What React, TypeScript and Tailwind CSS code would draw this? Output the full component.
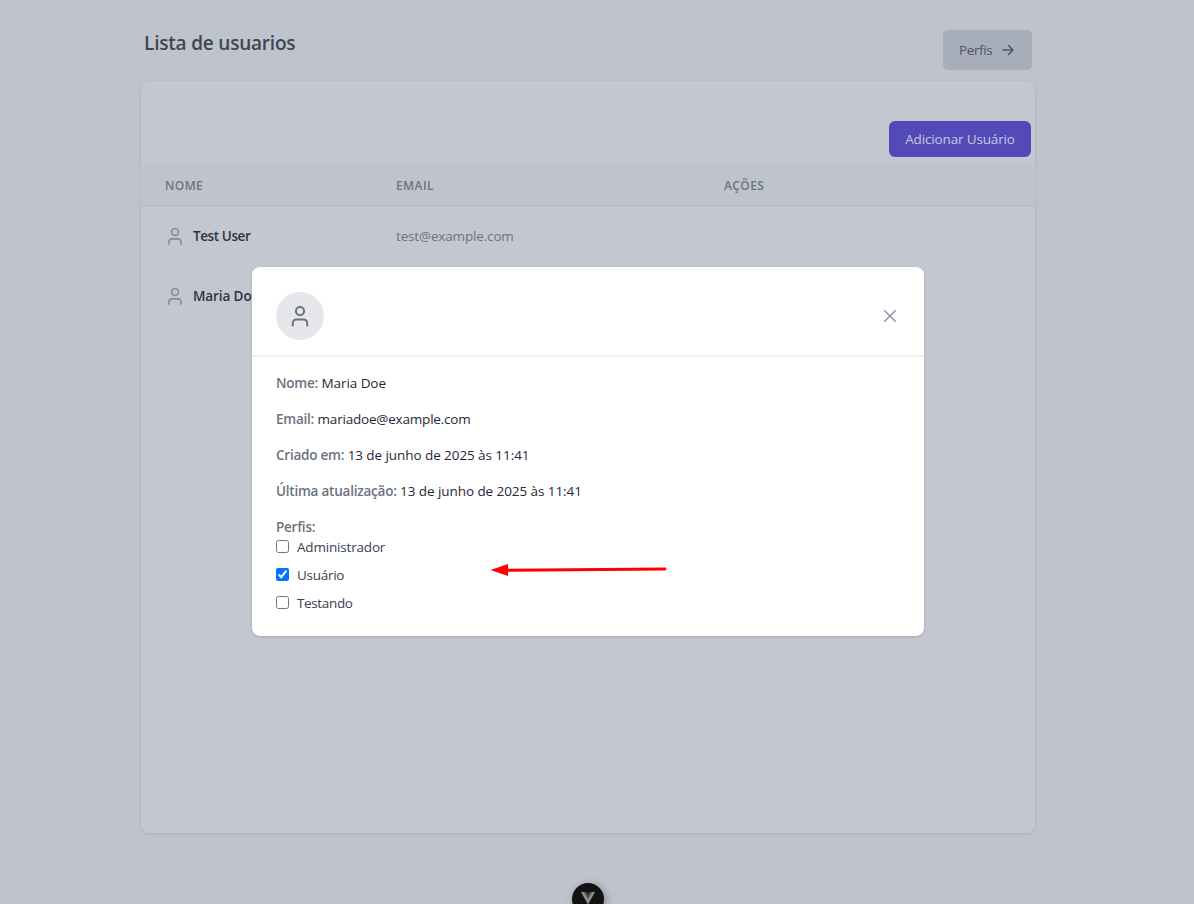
import { ReactNode } from "react";

function UserIcon({ className }: { className: string }) {
  return (
    <svg viewBox="0 0 24 24" fill="none" stroke="currentColor" strokeWidth="2" strokeLinecap="round" strokeLinejoin="round" className={className}>
      <circle cx="12" cy="7.1" r="4.1" />
      <path d="M19.200 21.500v-2.500a3.500 3.500 0 0 0-3.500-3.500H8.300a3.500 3.500 0 0 0-3.500 3.500v2.500" />
    </svg>
  );
}

function Row({ name, email, nameClass }: { name: string; email: string; nameClass: string }) {
  return (
    <div className="grid h-[60px] grid-cols-[231px_328px_1fr] items-center px-6">
      <div className="flex items-center">
        <UserIcon className="size-5 text-[#858d9c]" />
        <span className={`ml-2 text-[13.5px] leading-5 font-semibold text-[#2d3444] ${nameClass}`}>{name}</span>
      </div>
      <div className="mb-px text-[13.5px] leading-5 tracking-[-0.16px] text-[#6c7483]">{email}</div>
    </div>
  );
}

function Field({ label, children }: { label: string; children?: ReactNode }) {
  return (
    <p className="h-5 text-[13.5px] leading-5 tracking-[-0.07px] whitespace-nowrap text-[#1f2937]">
      <span className="font-semibold tracking-[-0.23px] text-[#6b7280]">{label}</span> {children}
    </p>
  );
}

function Option({ label, checked, className }: { label: string; checked?: boolean; className: string }) {
  return (
    <label className={`flex h-5 items-center text-[13.5px] leading-5 text-[#374151] ${className}`}>
      <input type="checkbox" defaultChecked={checked} className="mr-2 mb-[2px] size-[13px]" />
      {label}
    </label>
  );
}

function Modal() {
  return (
    <div className="absolute top-[267px] left-[252px] flex h-[369px] w-[672px] flex-col rounded-lg bg-white shadow-[0_1px_3px_rgba(0,0,0,0.16)]">
      <div className="flex h-[90px] items-center justify-between border-b-2 border-[#eeeff1] px-6 pt-[9px]">
        <div className="flex size-12 items-center justify-center rounded-full bg-[#e5e7eb]">
          <UserIcon className="size-6 text-[#6b7280]" />
        </div>
        <svg viewBox="0 0 20 20" fill="none" stroke="#8b95a5" strokeWidth="1.5" strokeLinecap="round" className="size-5">
          <path d="M4.700 4.700l10.600 10.600M15.300 4.700l-10.600 10.600" />
        </svg>
      </div>
      <div className="flex flex-col gap-4 px-6 pt-4">
        <Field label="Nome:">Maria Doe</Field>
        <Field label="Email:"><span className="tracking-[-0.2px]">mariadoe@example.com</span></Field>
        <Field label="Criado em:">13 de junho de 2025 às 11:41</Field>
        <Field label="Última atualização:">13 de junho de 2025 às 11:41</Field>
        <div>
          <Field label="Perfis:" />
          <div className="flex flex-col gap-2">
            <Option label="Administrador" className="tracking-[-0.18px]" />
            <Option label="Usuário" checked className="tracking-[-0.28px]" />
            <Option label="Testando" className="tracking-[-0.36px]" />
          </div>
        </div>
      </div>
      <svg viewBox="0 0 180 16" className="absolute top-[295px] left-[236px] h-4 w-[180px]">
        <path d="M18 8.200L177 7" stroke="#fe0000" strokeWidth="3" strokeLinecap="round" />
        <path d="M2.500 8L20 2v12z" fill="#fe0000" />
      </svg>
    </div>
  );
}

export default function App() {
  return (
    <div className="relative h-[904px] w-[1194px] overflow-hidden bg-[#bec3cc] font-['Open_Sans','Noto_Sans',sans-serif]">
      <header className="ml-[141px] flex h-[81px] w-[894px] items-start justify-between px-[3px] pt-[30px]">
        <h1 className="text-[19px] leading-[26px] font-semibold tracking-[-0.2px] text-[#3d4757]">Lista de usuarios</h1>
        <button className="flex h-10 w-[89px] items-center rounded-[5px] bg-[#a8aeb9] pl-4 text-[13.5px] text-[#4d5666]">
          <span className="mb-px w-[33px] leading-5 tracking-[-0.4px]">Perfis</span>
          <svg viewBox="0 0 16 16" fill="none" stroke="currentColor" strokeWidth="1.5" strokeLinecap="round" strokeLinejoin="round" className="ml-2 size-4">
            <path d="M3 8h10M8.500 3.500L13 8l-4.500 4.500" />
          </svg>
        </button>
      </header>
      <main className="ml-[141px] h-[752px] w-[894px] rounded-lg bg-[#c4c7cf] shadow-[0_1px_3px_rgba(50,60,80,0.14)]">
        <div className="flex h-[84px] items-end justify-end pr-1 pb-2">
          <button className="h-9 w-[142px] rounded-md bg-[#5349b8] pb-px text-[13.5px] leading-5 tracking-[-0.15px] text-[#c7c9dc]">Adicionar Usuário</button>
        </div>
        <div className="grid h-[41px] grid-cols-[231px_328px_1fr] items-center border-b border-[#b1b6c0] bg-[#bfc4cc] px-6 pt-px text-[12px] leading-4 font-semibold tracking-[0.4px] text-[#6c7483]">
          <span>NOME</span>
          <span>EMAIL</span>
          <span>AÇÕES</span>
        </div>
        <Row name="Test User" email="test@example.com" nameClass="tracking-[-0.4px]" />
        <Row name="Maria Doe" email="mariadoe@example.com" nameClass="tracking-[-0.1px]" />
      </main>
      <Modal />
      <div className="absolute top-[883px] left-[572px] size-8 rounded-full bg-[#121212] shadow-[2px_2px_8px_rgba(0,0,0,0.3)]">
        <svg viewBox="0 0 32 32" className="size-8">
          <path d="M9 9h5l2 3.500L18 9h5l-7 12.500z" fill="#8d8d8d" />
          <path d="M12 9h2.500l1.500 2.500L17.500 9H20l-4 7z" fill="#484848" />
        </svg>
      </div>
    </div>
  );
}
